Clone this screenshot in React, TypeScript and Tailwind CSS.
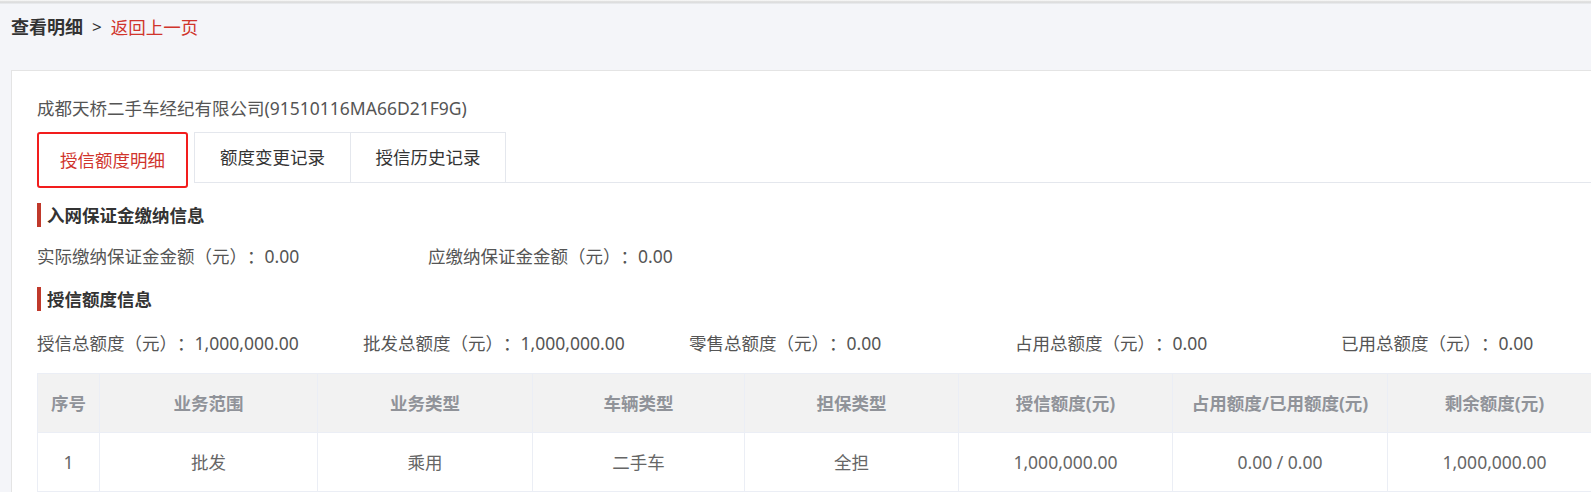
import React from 'react';

const FONT = '"Noto Sans", "Noto Sans CJK SC", sans-serif';
const CJK = '"Noto Sans CJK SC", sans-serif';

const COLS = [62, 218, 215, 212, 214, 214, 215, 214];
const HEADERS = ['序号', '业务范围', '业务类型', '车辆类型', '担保类型', '授信额度(元)', '占用额度/已用额度(元)', '剩余额度(元)'];
const ROWS = [['1', '批发', '乘用', '二手车', '全担', '1,000,000.00', '0.00 / 0.00', '1,000,000.00']];

const SectionTitle = ({ children }: { children: React.ReactNode }) => (
  <div className="flex items-center h-[24px]">
    <span className="w-[4px] h-[24px] bg-[#c0392b]" />
    <span className="ml-[6px] font-bold text-[#333] leading-[24px]">{children}</span>
  </div>
);

const Field = ({ label, value, w }: { label: string; value: string; w: string }) => (
  <div className={`${w} shrink-0 whitespace-nowrap`}>
    <span style={{ fontFamily: CJK }}>{label}（元）：</span>
    <span>{value}</span>
  </div>
);

export default function App() {
  return (
    <div
      className="w-full h-[492px] overflow-hidden bg-[#f4f5f9] text-[17.5px] [text-spacing-trim:space-all]"
      style={{ fontFamily: FONT }}
    >
      <div className="h-[4px] bg-gradient-to-b from-[#fdfdfd] via-[#d8d8d8] to-[#eceef2]" />
      <div className="w-[1640px]">
        {/* breadcrumb */}
        <div className="pl-[11px] pt-[11px] h-[66px] leading-[24px] flex items-start">
          <span className="font-bold text-[#333] text-[18px]">查看明细</span>
          <span className="mx-[9px] text-[#333] text-[17px]">&gt;</span>
          <span className="text-[#d0342c]">返回上一页</span>
        </div>

        {/* card */}
        <div className="ml-[11px] w-[1616px] bg-white border border-[#e4e4e4] pl-[25px] pr-[25px] pt-[25px] pb-[20px]">
          <div className="leading-[24px] text-[#555]">成都天桥二手车经纪有限公司(91510116MA66D21F9G)</div>

          <div className="mt-[12px] flex items-start">
            <div className="w-[151px] h-[56px] border-2 border-[#f21d1d] rounded-[3px] flex items-center justify-center text-[#d0342c]">
              授信额度明细
            </div>
            <div className="ml-[6px] flex-1 flex border-b border-[#e4e7ed]">
              <div className="w-[156px] h-[50px] border-t border-l border-[#e4e7ed] flex items-center justify-center text-[#333]">
                额度变更记录
              </div>
              <div className="w-[156px] h-[50px] border-t border-l border-r border-[#e4e7ed] flex items-center justify-center text-[#333]">
                授信历史记录
              </div>
            </div>
          </div>

          <div className="mt-[15px]">
            <SectionTitle>入网保证金缴纳信息</SectionTitle>
          </div>
          <div className="mt-[17px] flex leading-[24px] text-[#555]">
            <Field w="w-[391px]" label="实际缴纳保证金金额" value="0.00" />
            <Field w="w-[391px]" label="应缴纳保证金金额" value="0.00" />
          </div>

          <div className="mt-[19px]">
            <SectionTitle>授信额度信息</SectionTitle>
          </div>
          <div className="mt-[20px] flex leading-[24px] text-[#555]">
            <Field w="w-[326px]" label="授信总额度" value="1,000,000.00" />
            <Field w="w-[326px]" label="批发总额度" value="1,000,000.00" />
            <Field w="w-[326px]" label="零售总额度" value="0.00" />
            <Field w="w-[326px]" label="占用总额度" value="0.00" />
            <Field w="w-[326px]" label="已用总额度" value="0.00" />
          </div>

          <table className="mt-[18px] table-fixed border-collapse" style={{ width: COLS.reduce((a, b) => a + b, 0) }}>
            <colgroup>
              {COLS.map((w, i) => (
                <col key={i} style={{ width: w }} />
              ))}
            </colgroup>
            <thead>
              <tr className="bg-[#f2f2f2] h-[59px]">
                {HEADERS.map((h) => (
                  <th key={h} className="border border-[#ebeef5] font-bold text-[#909399] text-center whitespace-nowrap">
                    {h}
                  </th>
                ))}
              </tr>
            </thead>
            <tbody>
              {ROWS.map((r, ri) => (
                <tr key={ri} className="h-[59px]">
                  {r.map((c, ci) => (
                    <td key={ci} className="border border-[#ebeef5] text-center text-[#666] font-normal">
                      {c}
                    </td>
                  ))}
                </tr>
              ))}
            </tbody>
          </table>
        </div>
      </div>
    </div>
  );
}
